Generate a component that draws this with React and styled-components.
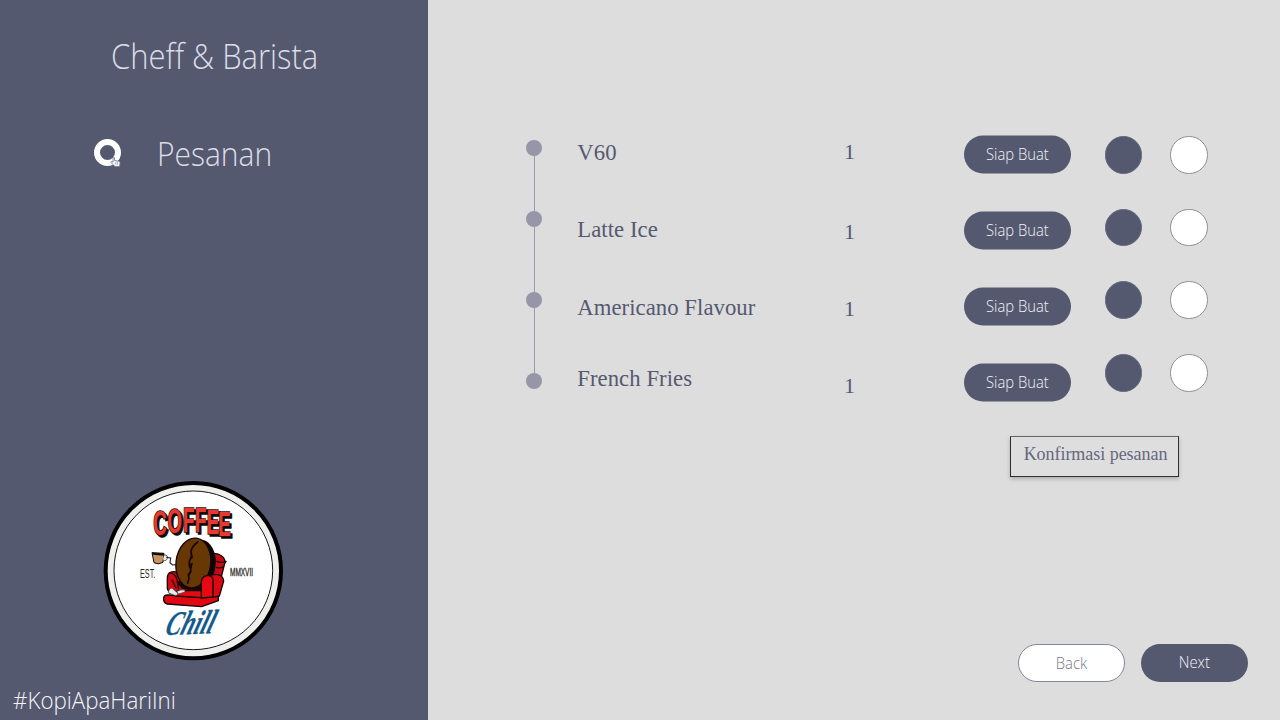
import React from "react";
import styled, { createGlobalStyle } from "styled-components";

const ink = "#555970";
const paper = "#dddddd";

const GlobalStyle = createGlobalStyle`
  * { box-sizing: border-box; }
  body { margin: 0; background: ${paper}; overflow: hidden; }
`;

const Screen = styled.div`
  display: flex;
  width: 1280px;
  height: 720px;
  background: ${paper};
  font-family: "Open Sans", sans-serif;
  font-weight: 300;
`;

const Sidebar = styled.aside`
  width: 428px;
  height: 720px;
  background: ${ink};
  display: flex;
  flex-direction: column;
  align-items: flex-start;
`;

const Title = styled.h1`
  margin: 31px 0 0 110.5px;
  font-size: 34.5px;
  line-height: 50px;
  font-weight: 300;
  white-space: nowrap;
  transform: scaleX(0.897);
  transform-origin: left;
  color: #dcdde6;
`;

const MenuItem = styled.div`
  display: flex;
  align-items: center;
  height: 50px;
  margin: 48px 0 0 94px;
`;

const Ring = styled.span`
  position: relative;
  width: 27px;
  height: 27px;
  margin-top: -3px;
  border: 6px solid #fff;
  border-radius: 50%;
`;

const Pointer = styled.svg`
  position: absolute;
  left: 10px;
  top: 11px;
`;

const MenuLabel = styled.span`
  margin: -2px 0 0 35.500px;
  font-size: 33.5px;
  line-height: 50px;
  transform: scaleX(0.895);
  transform-origin: left;
  color: #dcdde6;
`;

const Logo = styled.svg`
  display: block;
  flex: none;
  width: 210px;
  height: 200px;
  margin: 291px 0 0 90px;
`;

const Hashtag = styled.p`
  margin: 13px 0 0 13px;
  font-size: 23.5px;
  line-height: 34px;
  font-weight: 300;
  transform: scaleX(0.95);
  transform-origin: left;
  color: #f4f5fa;
`;

const Main = styled.main`
  width: 852px;
  padding: 135px 0 0 98px;
  display: flex;
  flex-direction: column;
`;

const Orders = styled.section`
  display: flex;
  align-items: flex-start;
  height: 301px;
`;

const Timeline = styled.div`
  width: 16px;
  margin-top: 5px;
  display: flex;
  flex-direction: column;
  align-items: center;
`;

const Stop = styled.i`
  width: 16px;
  height: 16px;
  border-radius: 50%;
  background: #9796a8;
`;

const Link = styled.i`
  width: 1px;
  height: ${(p) => p.$length}px;
  margin-left: 1px;
  background: #9a99a8;
`;

const Column = styled.div`
  display: flex;
  flex-direction: column;
  width: ${(p) => p.$width}px;
  margin: ${(p) => p.$top || 0}px 0 0 ${(p) => p.$left}px;
  gap: ${(p) => p.$gap || 0}px;
`;

const Entry = styled.span`
  height: ${(p) => p.$pitch}px;
  font-family: "Liberation Serif", serif;
  font-weight: 400;
  font-size: ${(p) => (p.$small ? 22 : 22.7)}px;
  line-height: 26px;
  letter-spacing: 0.06px;
  white-space: nowrap;
  color: ${ink};
`;

const Pill = styled.button`
  flex: none;
  width: 107px;
  height: 38px;
  padding: 0 0 ${(p) => p.$lift || 0}px;
  border: ${(p) => (p.$light ? "1px solid #85879a" : "0")};
  border-radius: 19px;
  background: ${(p) => (p.$light ? "#fff" : ink)};
  color: ${(p) => (p.$light ? "#777a8c" : "#f0f1f7")};
  font-family: "Open Sans", sans-serif;
  font-weight: 300;
  font-size: 16px;
`;

const PillLabel = styled.span`
  display: inline-block;
  margin: 0 -4px;
  transform: translateX(-0.5px) scaleX(0.925);
`;

const HalfStep = styled.div`
  transform: translateY(0.5px);
`;

const Status = styled.i`
  width: 37.5px;
  height: 37.5px;
  border-radius: 50%;
  border: 1px solid ${(p) => (p.$done ? "#656980" : "#909090")};
  background: ${(p) => (p.$done ? ink : "#fff")};
`;

const Confirm = styled.button`
  width: 169px;
  height: 41px;
  margin-left: 484px;
  padding: 0 0 5px 2px;
  border: 1px solid #2e2e33;
  border-top-color: #66666a;
  background: #dedede;
  box-shadow: 0 2px 4px rgba(0, 0, 0, 0.22);
  font-family: "Liberation Serif", serif;
  font-size: 18px;
  letter-spacing: -0.04px;
  white-space: nowrap;
  color: #656880;
`;

const Footer = styled.footer`
  display: flex;
  gap: 16px;
  margin: 167px 0 0 492px;
`;

const items = [
  { name: "V60", qty: 1, namePitch: 77.4, qtyPitch: 79.5 },
  { name: "Latte Ice", qty: 1, namePitch: 77.5, qtyPitch: 77.5 },
  { name: "Americano Flavour", qty: 1, namePitch: 71.5, qtyPitch: 77 },
  { name: "French Fries", qty: 1, namePitch: 26, qtyPitch: 26 },
];

function HandPointer() {
  return (
    <Pointer width="11" height="12" viewBox="0 0 11 12">
      <path
        d="M3 1.2c.8-.4 1.4 0 1.5.7v2.5l4 .8c1.3.3 1.7 1 1.6 2L9.500 10.600H5L1 6.500c-.3-.9.500-1.300 1.200-.9l.8.6z"
        fill="#f4f4f8"
        stroke="#6f7285"
        strokeWidth=".8"
      />
      <path d="M5.800 6v2.500M7.500 6.300v2.200" stroke="#777a8c" strokeWidth=".6" />
    </Pointer>
  );
}

function CoffeeLogo() {
  const coffee = (fill, dx, dy, stroke) => (
    <g
      transform={`translate(${dx} ${dy}) scale(.54 1)`}
      fontFamily="Liberation Sans, sans-serif"
      fontWeight="700"
      fontSize="104"
      fill={fill}
      stroke={stroke}
      strokeWidth="5"
      paintOrder="stroke"
    >
      <text x="352 430 516 584 649 713" y="194 189 185 187 191 197">
        COFFEE
      </text>
    </g>
  );
  return (
    <Logo viewBox="0 0 630 600">
      <circle cx="310" cy="302" r="263" fill="#efefed" stroke="#000" strokeWidth="12" />
      <circle cx="310" cy="301" r="238" fill="#fff" stroke="#161616" strokeWidth="3" />
      {coffee("#0c0708", 6, 6, "#0c0708")}
      {coffee("#e6392f", 0, 0, "#2a0c0c")}

      <g stroke="#160505" strokeWidth="4" strokeLinejoin="round" strokeLinecap="round">
        <path d="M366 254q10-6 20-1 18 7 19 22l3-1-4 7-14 55-30 0z" fill="#c90a14" />
        <path d="M381 274q12 6 24 1M380 292q10 4 18-1" fill="none" />
        <path d="M232 322q2-17 18-17 14 0 20 16l14 26 76-4v26l-60 10-60-8-8-14z" fill="#d40812" />
        <path d="M242 309q16 3 20 24l4 24M246 330l12 24" fill="none" />
        <ellipse cx="326" cy="283" rx="49" ry="72" transform="rotate(7 326 283)" fill="#090606" />
        <path d="M262 336l16 20 52 4 20-8-8-20z" fill="#170b08" />
        <ellipse cx="310" cy="279" rx="52" ry="75" transform="rotate(7 310 279)" fill="#683804" />
        <path
          d="M323 216q-18 14-20 28l2 14-7 16 0 14 5 14-8 12 2 12-4 14"
          fill="none"
          strokeWidth="5"
        />
        <path d="M304 248l3 16-7 4M298 284l9-4-4 16M297 316l6-8" fill="#160505" strokeWidth="3" />
        <path d="M221 384q1-10 14-9l98 8 52-8 0 17-50 18-103-8q-13-4-11-18z" fill="#e00811" />
        <path d="M262 362l74-1 0 22-80-5z" fill="#e50912" />
        <path d="M352 317l26-4q22 2 23 20l-13 45-20 4 1-51q-2-14-17-14z" fill="#dd0711" />
        <path d="M334 336q2-18 18-19 17-1 17 14l-1 50-34 3z" fill="#e90812" />
      </g>
      <g fill="#e9e9ea" stroke="#444" strokeWidth="2">
        <path d="M242 355q7-2 10 5l12 10q0 8-10 6l-20-8q2-8 8-13z" />
        <path d="M261 364q10-6 23-4 4 4-2 7l-17 5z" />
      </g>

      <path d="M186 248l36 2-3 27q-15 9-27 1z" fill="#c9935f" stroke="#090707" strokeWidth="3" />
      <path d="M186 248l36 2-1 7-33-3z" fill="#160b07" />
      <path d="M222 255q13 0 10 10-3 10-13 5" fill="#eee" stroke="#555" strokeWidth="3" />
      <path d="M229 262l13 2-2 14 8 7 10-1" fill="none" stroke="#24262c" strokeWidth="3.500" />

      <g fill="#262626" fontFamily="Liberation Sans Narrow, Liberation Sans, sans-serif">
        <text x="150" y="325" fontSize="41" textLength="46" lengthAdjust="spacingAndGlyphs">
          EST.
        </text>
        <text
          x="420"
          y="319"
          fontSize="32"
          textLength="69"
          lengthAdjust="spacingAndGlyphs"
          stroke="#262626"
          strokeWidth="1"
        >
          MMXVII
        </text>
      </g>

      <g
        transform="translate(221 495) rotate(-2) skewX(-20)"
        fill="#14598c"
        stroke="#14598c"
        strokeWidth="1"
        fontFamily="Liberation Serif, serif"
        fontStyle="italic"
        fontWeight="700"
      >
        <text fontSize="101" textLength="144" lengthAdjust="spacingAndGlyphs">
          Chill
        </text>
      </g>
    </Logo>
  );
}

export default function App() {
  return (
    <>
      <GlobalStyle />
      <Screen>
        <Sidebar>
          <Title>Cheff &amp; Barista</Title>
          <MenuItem>
            <Ring>
              <HandPointer />
            </Ring>
            <MenuLabel>Pesanan</MenuLabel>
          </MenuItem>
          <CoffeeLogo />
          <Hashtag>#KopiApaHariIni</Hashtag>
        </Sidebar>
        <Main>
          <Orders>
            <Timeline>
              <Stop />
              <Link $length={55} />
              <Stop />
              <Link $length={65} />
              <Stop />
              <Link $length={65} />
              <Stop />
            </Timeline>
            <Column $width={220} $left={35.3} $top={5}>
              {items.map((item) => (
                <Entry key={item.name} $pitch={item.namePitch}>
                  {item.name}
                </Entry>
              ))}
            </Column>
            <Column $width={20} $left={46.7} $top={4.4}>
              {items.map((item) => (
                <Entry key={item.name} $pitch={item.qtyPitch} $small>
                  {item.qty}
                </Entry>
              ))}
            </Column>
            <HalfStep>
              <Column $width={107} $left={100} $gap={38}>
                {items.map((item) => (
                  <Pill key={item.name} $lift={3}>
                    <PillLabel>Siap Buat</PillLabel>
                  </Pill>
                ))}
              </Column>
            </HalfStep>
            <Column $width={37.5} $left={34} $top={1} $gap={35.2}>
              {items.map((item) => (
                <Status key={item.name} $done />
              ))}
            </Column>
            <Column $width={37.5} $left={28} $top={1} $gap={35.2}>
              {items.map((item) => (
                <Status key={item.name} />
              ))}
            </Column>
          </Orders>
          <Confirm>Konfirmasi pesanan</Confirm>
          <Footer>
            <Pill $light>
              <PillLabel>Back</PillLabel>
            </Pill>
            <Pill $lift={3}>
              <PillLabel>Next</PillLabel>
            </Pill>
          </Footer>
        </Main>
      </Screen>
    </>
  );
}
